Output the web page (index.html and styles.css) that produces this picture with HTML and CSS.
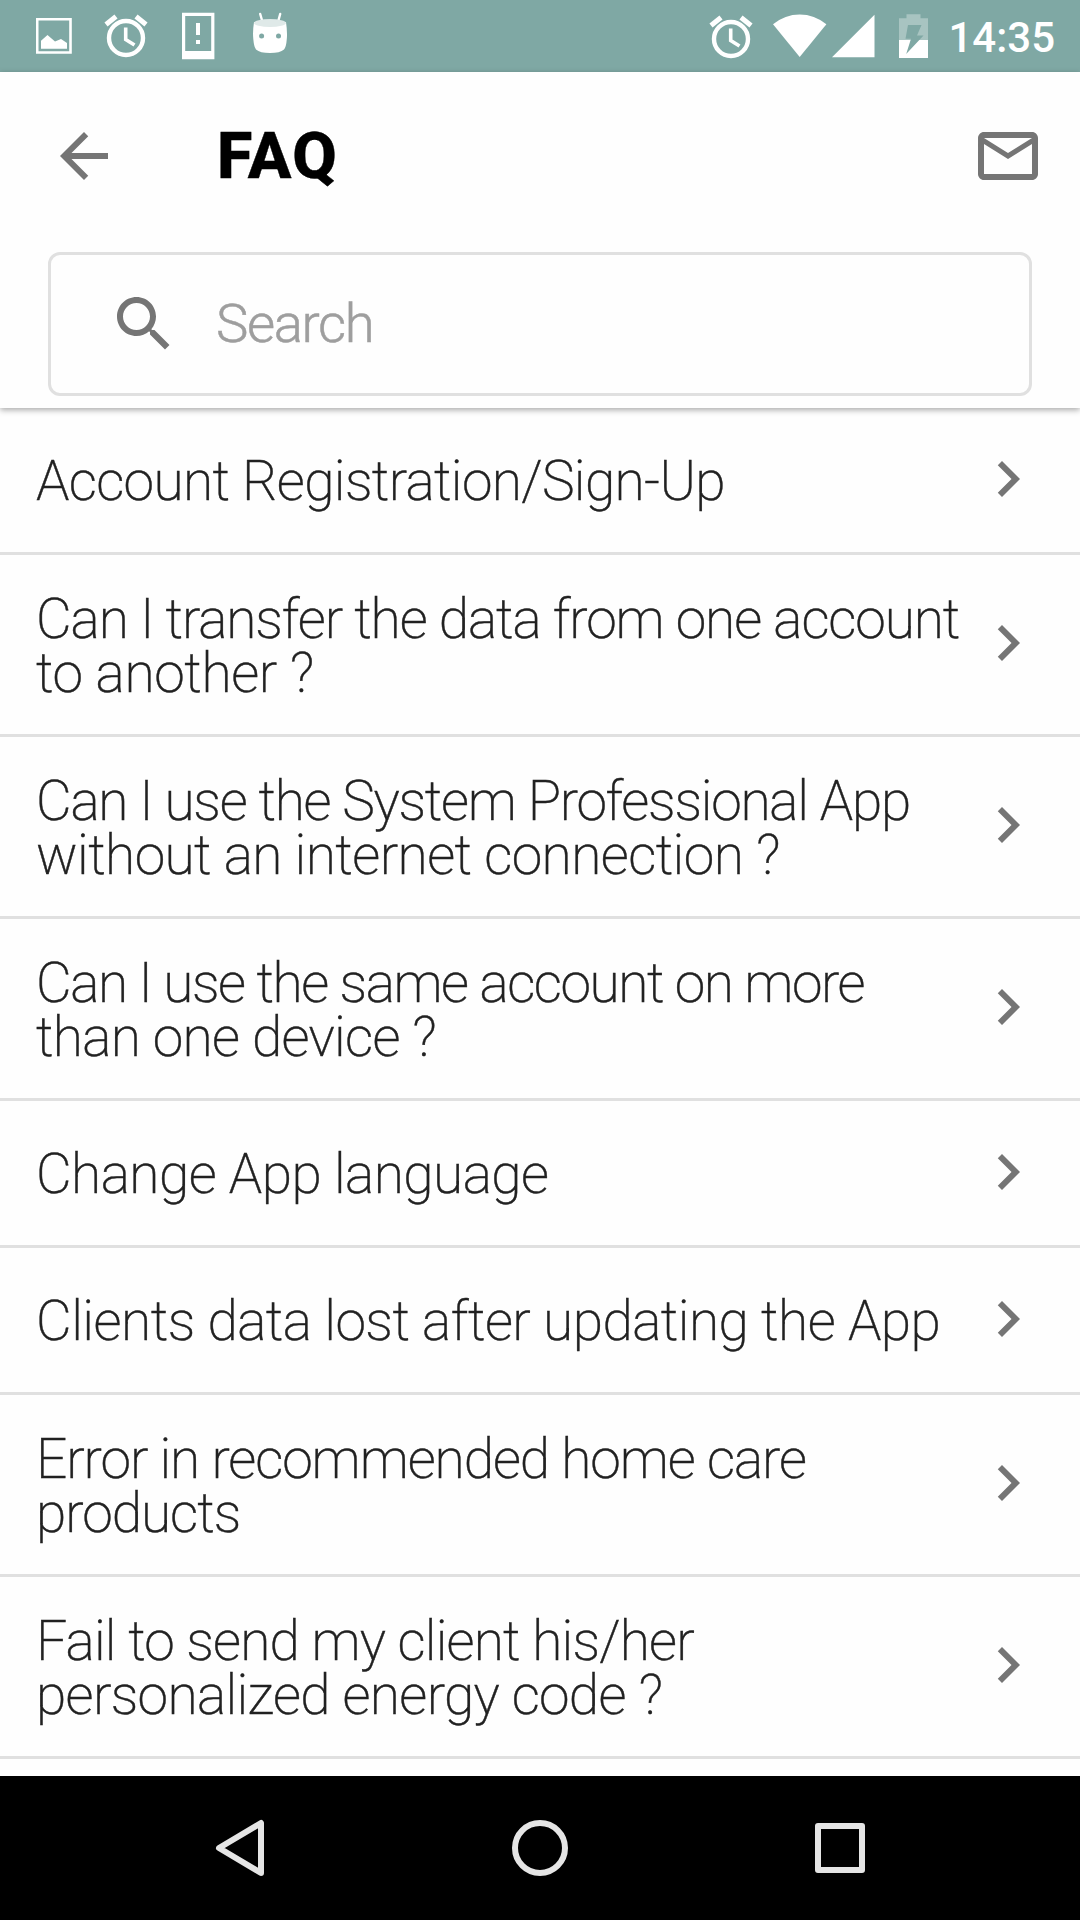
FILE: index.html
```
<!DOCTYPE html>
<html lang="en">
<head>
<meta charset="utf-8">
<title>FAQ</title>
<link rel="stylesheet" href="styles.css">
</head>
<body>
<svg width="0" height="0" class="defs">
  <symbol id="alarm" viewBox="0 0 44 46">
    <circle cx="22" cy="25" r="17" fill="none" stroke="#fff" stroke-width="4.4"/>
    <path d="M2 11.5 12 3.5M42 11.5 32 3.5" fill="none" stroke="#fff" stroke-width="5"/>
    <path d="M21.7 14.5V26.5L30.5 32" fill="none" stroke="#fff" stroke-width="3.6"/>
  </symbol>
  <symbol id="chevron" viewBox="0 0 24 24"><path d="M10 6 8.59 7.41 13.17 12l-4.58 4.59L10 18l6-6z" fill="#757575"/></symbol>
</svg>
<div class="screen">
  <header class="status">
    <div class="notes">
      <svg width="36" height="36" viewBox="0 0 36 36"><path d="M1.2 1.2H34.5V34.5H1.2Z" fill="none" stroke="#fff" stroke-width="2.6"/><path d="M5 30.8V22.8L11.5 17 19 23.6 25 21 31 25V30.8Z" fill="#fff"/></svg>
      <svg width="44" height="46"><use href="#alarm"/></svg>
      <svg width="34" height="48" viewBox="0 0 34 48"><path d="M0 .8H32.4V47.2H0ZM3.2 4V39H29.2V4Z" fill="#fff" fill-rule="evenodd"/><path d="M14 11h4v12h-4zM14 28h4v4h-4z" fill="#fff"/></svg>
      <svg width="36" height="42" viewBox="0 0 36 42"><path d="M8.2 2 10.5 10M28.2 2 26 10" stroke="#fff" stroke-width="2.4" stroke-linecap="round"/><path d="M2 10Q.5 20 1.3 27 2 35 4 37.5 8 41 18 41T32 37.5Q34.2 35 34.8 27 35.5 20 34 10Z" fill="#fff"/><ellipse cx="18" cy="11" rx="16" ry="4" fill="#dfe9e8"/><circle cx="9.6" cy="24" r="2.5" fill="#7fa8a4"/><circle cx="26.5" cy="24" r="2.5" fill="#7fa8a4"/></svg>
    </div>
    <div class="system">
      <svg width="44" height="46"><use href="#alarm"/></svg>
      <svg class="wifi" width="54" height="44" viewBox="0 0 54 44"><path d="M0 10.3Q12 .5 26.7 .5T53.4 10.3L26.7 43Z" fill="#fff"/></svg>
      <svg class="signal" width="43" height="44" viewBox="0 0 43 44"><path d="M0 43.3 42.5 .8V43.3Z" fill="#fff"/></svg>
      <svg class="battery" width="29" height="44" viewBox="0 0 29 44"><path d="M7.5 .3h14v4H29V26H0V4.3h7.5z" fill="#a8c4c1"/><path d="M0 26H29V44H0z" fill="#fff"/><path d="M9 11H22.5L18 21.5H24.5L7.2 40 12 24.7H6.5Z" fill="#7fa8a4"/></svg>
      <span class="time">14:35</span>
    </div>
  </header>

  <section class="top">
    <div class="toolbar">
      <svg width="72" height="72" viewBox="0 0 24 24"><path d="M20 11H7.83l5.59-5.59L12 4l-8 8 8 8 1.41-1.41L7.83 13H20v-2z" fill="#757575"/></svg>
      <h1 class="title">FAQ</h1>
      <svg width="72" height="72" viewBox="0 0 24 24"><path d="M20 4H4c-1.1 0-1.99.9-1.99 2L2 18c0 1.1.9 2 2 2h16c1.1 0 2-.9 2-2V6c0-1.1-.9-2-2-2zm0 14H4V8l8 5 8-5v10zm-8-7L4 6h16l-8 5z" fill="#757575"/></svg>
    </div>
    <div class="search">
      <svg width="72" height="72" viewBox="0 0 24 24"><path d="M15.5 14h-.79l-.28-.27C15.41 12.59 16 11.11 16 9.5 16 5.91 13.09 3 9.5 3S3 5.91 3 9.5 5.91 16 9.5 16c1.61 0 3.09-.59 4.23-1.57l.27.28v.79l5 4.99L20.49 19l-4.99-5zm-6 0C7.01 14 5 11.99 5 9.5S7.01 5 9.5 5 14 7.01 14 9.5 11.99 14 9.5 14z" fill="#757575"/></svg>
      <span class="hint">Search</span>
    </div>
  </section>

  <main class="list">
    <div class="row"><p><span class="a1">Account Registration/Sign-Up</span></p><svg width="72" height="72"><use href="#chevron"/></svg></div>
    <div class="row"><p><span class="b1">Can I transfer the data from one account</span><span class="b2">to another ?</span></p><svg width="72" height="72"><use href="#chevron"/></svg></div>
    <div class="row"><p><span class="c1">Can I use the System Professional App</span><span class="c2">without an internet connection ?</span></p><svg width="72" height="72"><use href="#chevron"/></svg></div>
    <div class="row"><p><span class="d1">Can I use the same account on more</span><span class="d2">than one device ?</span></p><svg width="72" height="72"><use href="#chevron"/></svg></div>
    <div class="row"><p><span class="e1">Change App language</span></p><svg width="72" height="72"><use href="#chevron"/></svg></div>
    <div class="row"><p><span class="f1">Clients data lost after updating the App</span></p><svg width="72" height="72"><use href="#chevron"/></svg></div>
    <div class="row"><p><span class="g1">Error in recommended home care</span><span class="g2">products</span></p><svg width="72" height="72"><use href="#chevron"/></svg></div>
    <div class="row"><p><span class="h1">Fail to send my client his/her</span><span class="h2">personalized energy code ?</span></p><svg width="72" height="72"><use href="#chevron"/></svg></div>
  </main>

  <nav class="nav">
    <svg width="60" height="60" viewBox="0 0 60 60"><path d="M51 5V55L9 30Z"/></svg>
    <svg width="60" height="60" viewBox="0 0 60 60"><circle cx="30" cy="30" r="25"/></svg>
    <svg width="60" height="60" viewBox="0 0 60 60"><rect x="8" y="8" width="44" height="44"/></svg>
  </nav>
</div>
</body>
</html>
```
FILE: styles.css
```
* { box-sizing: border-box; }
body { margin: 0; background: #fefefe; font-family: Roboto, "Liberation Sans", sans-serif; }
.defs { position: absolute; }
svg { display: block; flex: none; }
.screen { width: 1080px; height: 1920px; display: flex; flex-direction: column; overflow: hidden; }

.status { height: 72px; flex: none; background: #7fa8a4; display: flex; justify-content: space-between; color: #fff; }
.notes { display: flex; align-items: flex-start; padding: 12px 0 0 36px; }
.notes svg:nth-child(1) { margin-top: 6px; }
.notes svg:nth-child(2) { margin: 1px 0 0 32px; }
.notes svg:nth-child(3) { margin-left: 34px; }
.notes svg:nth-child(4) { margin-left: 36px; }
.system { display: flex; align-items: flex-start; padding: 13.5px 25px 0 0; }
.wifi { margin-left: 20px; }
.signal { margin-left: 5px; }
.battery { margin-left: 24px; }
.time { font-size: 42px; font-weight: 500; line-height: 48px; margin: 0 0 0 20px; }

.top { height: 336px; flex: none; position: relative; background: #fefefe; padding: 48px 36px 0 48px; box-shadow: 0 2px 6px rgba(0, 0, 0, .34); }
.toolbar { display: flex; align-items: center; height: 72px; }
.title { flex: 1; margin: 0 0 0 97px; font-size: 64.5px; font-weight: 800; letter-spacing: 1.4px; line-height: 73px; color: #000; -webkit-text-stroke: .4px #000; }
.search { width: 984px; height: 144px; margin-top: 60px; padding-left: 57px; border: 3px solid #e0e0e0; border-radius: 12px; display: flex; align-items: center; }
.hint { margin: -2px 0 0 36px; font-size: 54.5px; font-weight: 300; letter-spacing: -1.4px; color: #9e9e9e; -webkit-text-stroke: .5px #9e9e9e; }

.list { flex: 1; min-height: 0; overflow: hidden; }
.row { display: flex; align-items: center; justify-content: space-between; padding: 45px 36px; border-bottom: 3px solid #e0e0e0; height: 147px; }
.row:has(span + span) { height: 182px; padding: 35px 36px; }
.row p { margin: 0; padding-top: 2px; font-size: 55px; font-weight: 200; line-height: 54px; color: #212121; white-space: nowrap; -webkit-text-stroke: .45px #212121; }
.row span { display: block; }
.row svg { margin-top: -3px; }
.a1 { letter-spacing: -.65px; }
.b1 { letter-spacing: -1.09px; }
.b2 { letter-spacing: -.38px; }
.c1 { letter-spacing: -1.26px; }
.c2 { letter-spacing: -.58px; }
.d1 { letter-spacing: -1.45px; }
.d2 { letter-spacing: -.7px; }
.e1 { letter-spacing: -.55px; }
.f1 { letter-spacing: -.53px; }
.g1 { letter-spacing: -1.07px; }
.g2 { letter-spacing: -1px; }
.h1 { letter-spacing: -.83px; }
.h2 { letter-spacing: -.67px; }

.nav { height: 144px; flex: none; background: #000; display: flex; align-items: center; justify-content: center; gap: 240px; }
.nav path, .nav circle, .nav rect { fill: none; stroke: #e5e5e5; stroke-width: 6px; stroke-linejoin: round; }
```
